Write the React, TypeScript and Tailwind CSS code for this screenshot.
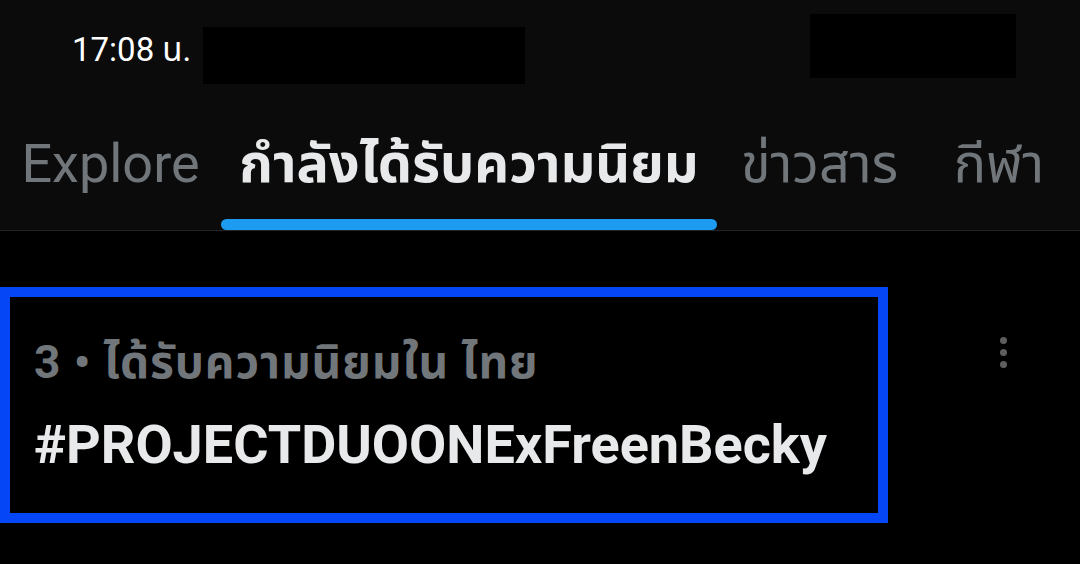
import { useState } from "react";

const tabs = [
  { label: "Explore", width: "w-[221px]" },
  { label: "กำลังได้รับความนิยม", width: "w-[496px]" },
  { label: "ข่าวสาร", width: "w-[205px]" },
  { label: "กีฬา", width: "w-[154px]" },
];

const font = "font-['Roboto','Noto_Sans','Noto_Sans_Thai',sans-serif]";

export default function App() {
  const [active, setActive] = useState(1);

  return (
    <div className={`h-[564px] w-[1080px] overflow-hidden bg-black ${font}`}>
      {/* status bar */}
      <div className="relative h-[100px] bg-[#0b0b0b]">
        <div className="pl-[72px] pt-[30px] text-[33px] leading-[40px] text-white">
          17:08 น.
        </div>
        {/* redacted */}
        <div className="absolute left-[203px] top-[27px] h-[57px] w-[322px] bg-black" />
        <div className="absolute left-[810px] top-[14px] h-[64px] w-[206px] bg-black" />
      </div>

      {/* tabs */}
      <div className="flex h-[131px] border-b border-[#222326] bg-[#0b0b0b]">
        {tabs.map((t, i) => (
          <button
            key={t.label}
            onClick={() => setActive(i)}
            className={`${t.width} flex shrink-0 flex-col items-center justify-between`}
          >
            <span
              className={`mt-[34px] whitespace-nowrap text-[54px] leading-[60px] ${
                i === active ? "font-bold text-[#e7e9ea]" : "text-[#71767b]"
              }`}
            >
              {t.label}
            </span>
            {i === active ? (
              <span className="h-[11px] w-full rounded-full bg-[#1d9bf0]" />
            ) : (
              <span className="h-[11px]" />
            )}
          </button>
        ))}
      </div>

      {/* trend row */}
      <div className="flex pt-[56px]">
        <div className="w-[888px] shrink-0 border-[10px] border-[#0547f6] pl-[24px] pt-[37px] pb-[38px]">
          <div className="text-[46px] font-bold leading-[57px] tracking-[0.02em] text-[#71767b]">
            3 • ได้รับความนิยมใน ไทย
          </div>
          <div className="mt-[24px] text-[54px] font-bold leading-[60px] text-[#e7e9ea]">
            #PROJECTDUOONExFreenBecky
          </div>
        </div>
        <div className="flex flex-1 justify-center pt-[50px] pl-[38px]">
          <div className="flex flex-col gap-[5px]">
            <span className="size-[7px] rounded-full bg-[#5e5e5e]" />
            <span className="size-[7px] rounded-full bg-[#5e5e5e]" />
            <span className="size-[7px] rounded-full bg-[#5e5e5e]" />
          </div>
        </div>
      </div>
    </div>
  );
}
